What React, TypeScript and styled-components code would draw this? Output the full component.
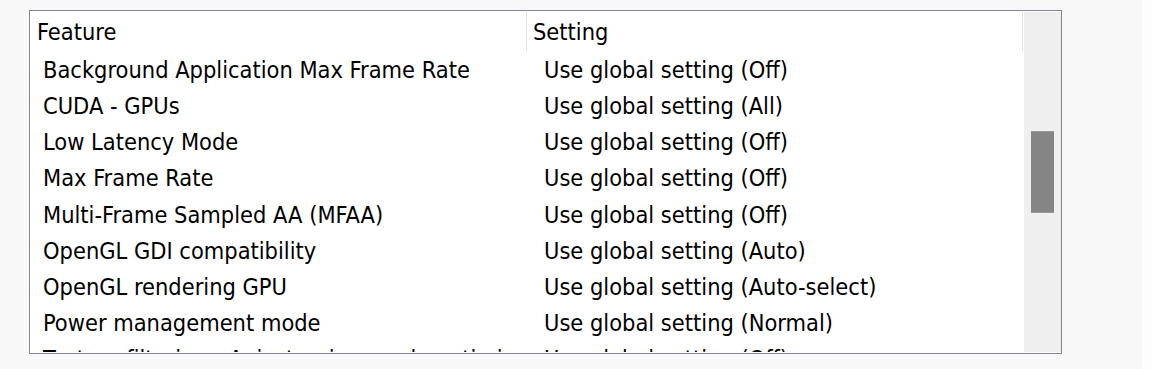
import styled, { createGlobalStyle } from "styled-components";

const GlobalStyle = createGlobalStyle`
  html, body {
    margin: 0;
    padding: 0;
    background: #f8f8f8;
  }
  body {
    font-family: "DejaVu Sans Condensed", "DejaVu Sans", Tahoma, sans-serif;
    color: #000;
  }
`;

const Page = styled.div`
  display: flex;
  width: 1152px;
  height: 369px;
  overflow: hidden;
`;

const Canvas = styled.div`
  flex: 1;
  padding: 10px 0 0 29px;
`;

const EdgeStrip = styled.div`
  width: 10px;
  background: #fdfdfd;
`;

const ListBox = styled.div`
  display: flex;
  width: 1033px;
  height: 344px;
  box-sizing: border-box;
  border: 1px solid #858592;
  padding: 1px 0 1px 1px;
  background: #fff;
`;

const Grid = styled.div`
  flex: 1;
  overflow: hidden;
  font-size: 23.4px;
`;

const HeaderRow = styled.div`
  display: flex;
  height: 39px;
  line-height: 39px;
`;

const HeaderCell = styled.div`
  width: 496px;
  box-sizing: border-box;
  padding: 2px 0 0 6px;
  border-right: 1px solid #e3e3e3;
  white-space: nowrap;
  line-height: 37px;
`;

const Row = styled.div`
  display: flex;
  height: 36.15px;
  line-height: 38px;
`;

const Cell = styled.div<{ $indent: number }>`
  width: 496px;
  box-sizing: border-box;
  padding-left: ${(p) => p.$indent}px;
  white-space: nowrap;
  overflow: hidden;
`;

const Track = styled.div`
  width: 37px;
  background: #efefef;
  padding: 0 7px;
  box-sizing: border-box;
`;

const Thumb = styled.div`
  margin-top: 119px;
  height: 82px;
  background: #858585;
  border-top: 1px solid #999;
  border-bottom: 1px solid #999;
  box-sizing: border-box;
`;

const rows: [string, string][] = [
  ["Background Application Max Frame Rate", "Use global setting (Off)"],
  ["CUDA - GPUs", "Use global setting (All)"],
  ["Low Latency Mode", "Use global setting (Off)"],
  ["Max Frame Rate", "Use global setting (Off)"],
  ["Multi-Frame Sampled AA (MFAA)", "Use global setting (Off)"],
  ["OpenGL GDI compatibility", "Use global setting (Auto)"],
  ["OpenGL rendering GPU", "Use global setting (Auto-select)"],
  ["Power management mode", "Use global setting (Normal)"],
  ["Texture filtering - Anisotropic sample optimization", "Use global setting (Off)"],
];

const App = () => {
  return (
    <>
      <GlobalStyle />
      <Page>
        <Canvas>
          <ListBox>
            <Grid>
              <HeaderRow>
                <HeaderCell>Feature</HeaderCell>
                <HeaderCell>Setting</HeaderCell>
              </HeaderRow>
              {rows.map(([feature, setting]) => (
                <Row key={feature}>
                  <Cell $indent={12}>{feature}</Cell>
                  <Cell $indent={17}>{setting}</Cell>
                </Row>
              ))}
            </Grid>
            <Track>
              <Thumb />
            </Track>
          </ListBox>
        </Canvas>
        <EdgeStrip />
      </Page>
    </>
  );
};

export default App;
